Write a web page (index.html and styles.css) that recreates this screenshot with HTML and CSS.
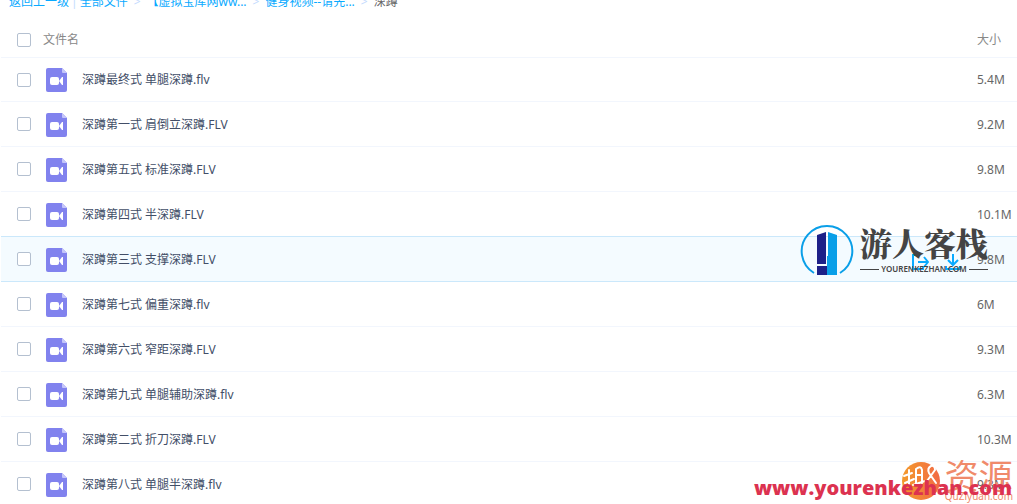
FILE: index.html
```html
<!DOCTYPE html>
<html lang="zh-CN">
  <head>
    <meta charset="utf-8">
    <title>深蹲</title>
    <link rel="stylesheet" href="styles.css">
  </head>
  <body>
    <svg class="sprite" aria-hidden="true">
      <symbol id="icon-video" viewBox="0 0 21 24">
        <path d="M2 0H16L21 5V22Q21 24 19 24H2Q0 24 0 22V2Q0 0 2 0Z" fill="#8182ee"/>
        <path d="M16 0L21 5H17Q16 5 16 4Z" fill="#c5c6fa"/>
        <rect x="4" y="9" width="9" height="8" rx="2" fill="#fff"/>
        <path d="M13 13L16 9H17V17H16Z" fill="#fff"/>
      </symbol>
    </svg>

    <nav class="breadcrumb">
      <a href="#">返回上一级</a><span class="bar">|</span><a href="#">全部文件</a>
      <span class="arrow">&gt;</span>
      <a href="#">【虚拟宝库网ww...</a>
      <span class="arrow">&gt;</span>
      <a href="#">健身视频--请先...</a>
      <span class="arrow">&gt;</span>
      <span>深蹲</span>
    </nav>

    <table class="files">
      <colgroup>
        <col class="col-check">
        <col class="col-icon">
        <col>
        <col class="col-actions">
        <col class="col-size">
      </colgroup>
      <thead>
        <tr>
          <th class="check"><input type="checkbox" aria-label="全选"></th>
          <th colspan="2">文件名</th>
          <th></th>
          <th>大小</th>
        </tr>
      </thead>
      <tbody>
        <tr>
          <td class="check"><input type="checkbox" id="f1"></td>
          <td class="icon"><svg><use href="#icon-video"/></svg></td>
          <td class="name"><label for="f1">深蹲最终式 单腿深蹲.flv</label></td>
          <td class="actions"></td>
          <td class="size">5.4M</td>
        </tr>
        <tr>
          <td class="check"><input type="checkbox" id="f2"></td>
          <td class="icon"><svg><use href="#icon-video"/></svg></td>
          <td class="name"><label for="f2">深蹲第一式 肩倒立深蹲.FLV</label></td>
          <td class="actions"></td>
          <td class="size">9.2M</td>
        </tr>
        <tr>
          <td class="check"><input type="checkbox" id="f3"></td>
          <td class="icon"><svg><use href="#icon-video"/></svg></td>
          <td class="name"><label for="f3">深蹲第五式 标准深蹲.FLV</label></td>
          <td class="actions"></td>
          <td class="size">9.8M</td>
        </tr>
        <tr>
          <td class="check"><input type="checkbox" id="f4"></td>
          <td class="icon"><svg><use href="#icon-video"/></svg></td>
          <td class="name"><label for="f4">深蹲第四式 半深蹲.FLV</label></td>
          <td class="actions"></td>
          <td class="size">10.1M</td>
        </tr>
        <tr class="active">
          <td class="check"><input type="checkbox" id="f5"></td>
          <td class="icon"><svg><use href="#icon-video"/></svg></td>
          <td class="name"><label for="f5">深蹲第三式 支撑深蹲.FLV</label></td>
          <td class="actions">
            <div class="tools">
              <button type="button" aria-label="分享">
                <svg viewBox="0 0 18 18"><path d="M9 2H2V16H12V13M7 9H17M13 4L17 9L13 14"/></svg>
              </button>
              <button type="button" aria-label="下载">
                <svg viewBox="0 0 18 18"><path d="M9 1V12M4 7L9 12L14 7M2 13V16H16V13"/></svg>
              </button>
            </div>
          </td>
          <td class="size">9.8M</td>
        </tr>
        <tr>
          <td class="check"><input type="checkbox" id="f6"></td>
          <td class="icon"><svg><use href="#icon-video"/></svg></td>
          <td class="name"><label for="f6">深蹲第七式 偏重深蹲.flv</label></td>
          <td class="actions"></td>
          <td class="size">6M</td>
        </tr>
        <tr>
          <td class="check"><input type="checkbox" id="f7"></td>
          <td class="icon"><svg><use href="#icon-video"/></svg></td>
          <td class="name"><label for="f7">深蹲第六式 窄距深蹲.FLV</label></td>
          <td class="actions"></td>
          <td class="size">9.3M</td>
        </tr>
        <tr>
          <td class="check"><input type="checkbox" id="f8"></td>
          <td class="icon"><svg><use href="#icon-video"/></svg></td>
          <td class="name"><label for="f8">深蹲第九式 单腿辅助深蹲.flv</label></td>
          <td class="actions"></td>
          <td class="size">6.3M</td>
        </tr>
        <tr>
          <td class="check"><input type="checkbox" id="f9"></td>
          <td class="icon"><svg><use href="#icon-video"/></svg></td>
          <td class="name"><label for="f9">深蹲第二式 折刀深蹲.FLV</label></td>
          <td class="actions"></td>
          <td class="size">10.3M</td>
        </tr>
        <tr>
          <td class="check"><input type="checkbox" id="f10"></td>
          <td class="icon"><svg><use href="#icon-video"/></svg></td>
          <td class="name"><label for="f10">深蹲第八式 单腿半深蹲.flv</label></td>
          <td class="actions"></td>
          <td class="size">9.3M</td>
        </tr>
      </tbody>
    </table>

    <div class="brand">
      <svg class="brand-logo" viewBox="0 0 54 54">
        <path d="M14 49A25.300 25.300 0 1 1 40 49" fill="none" stroke="#0a9fe8" stroke-width="2"/>
        <path d="M17 11L26 8V40H17Z" fill="#1d2088"/>
        <path d="M17 42H27V51H17Z" fill="#1d2088"/>
        <path d="M28 8L37 11V51H27V32H28Z" fill="#0a9fe8"/>
      </svg>
      <div class="brand-text">
        <div class="brand-name">游人客栈</div>
        <div class="brand-url">YOURENKEZHAN.COM</div>
      </div>
    </div>

    <div class="source">
      <svg class="source-logo" viewBox="0 0 40 40">
        <defs>
          <linearGradient id="orange">
            <stop offset="0" stop-color="#f39a2c"/>
            <stop offset="1" stop-color="#f26a45"/>
          </linearGradient>
        </defs>
        <circle cx="20" cy="20" r="19" fill="url(#orange)"/>
        <path d="M3 15L11 12M8 9V24M4 22L13 18M15 8V24M15 8Q20 4 21 9V22M15 14H21M12 24L24 20M26 20L34 9Q34 4 30 5Q26 7 28 12L35 22" fill="none" stroke="#fff" stroke-width="2" stroke-linecap="round"/>
      </svg>
      <div class="source-text">
        <div class="source-name">资源</div>
        <div class="source-url">QuZiyuan.com</div>
      </div>
    </div>
    <div class="site">www.yourenkezhan.com</div>
  </body>
</html>
```
FILE: styles.css
```css
* {
  margin: 0;
  padding: 0;
  box-sizing: border-box;
}

body {
  position: relative;
  height: 100vh;
  overflow: hidden;
  background: #fff;
  color: #424e67;
  font-family: "Noto Sans", "Noto Sans CJK SC", sans-serif;
  font-size: 12px;
  line-height: 18px;
}

.sprite {
  display: none;
}

.breadcrumb {
  display: flex;
  height: 18px;
  margin-top: -7px;
  padding-left: 9px;
  white-space: nowrap;
  color: #666;
}

.breadcrumb a {
  color: #09aaff;
  text-decoration: none;
}

.bar {
  padding: 0 2px;
  color: #c4dbfe;
}

.arrow {
  padding: 0 6px;
  color: #c4dbfe;
}

.files {
  width: 100%;
  margin-top: 11px;
  padding-left: 1px;
  border-spacing: 0;
  table-layout: fixed;
}

.col-check {
  width: 42px;
}

.col-icon {
  width: 39px;
}

.col-actions {
  width: 66px;
}

.col-size {
  width: 40px;
}

.files th {
  height: 36px;
  border-bottom: 1px solid #f2f6fd;
  color: #888;
  font-weight: normal;
  text-align: left;
}

.files td {
  height: 45px;
  padding-top: 2px;
  border-bottom: 1px solid #f2f6fd;
}

.files tbody tr:first-child td {
  height: 44px;
  padding-top: 0;
}

.files .check {
  padding-top: 0;
  padding-left: 16px;
}

.files .icon {
  padding-left: 3px;
}

.icon svg {
  display: block;
  width: 21px;
  height: 24px;
}

.files .actions {
  padding-top: 6px;
}

.files .size {
  color: #666;
  white-space: nowrap;
}

.files tr.active td {
  background: #f4fbff;
  border-bottom-color: #cbe8fb;
  box-shadow: 0 -1px #cbe8fb;
}

input[type="checkbox"] {
  display: block;
  width: 14px;
  height: 14px;
  appearance: none;
  background: #fff;
  border: 1px solid #b4c0d0;
  border-radius: 2px;
}

.tools {
  display: flex;
  gap: 15px;
}

.tools button {
  width: 18px;
  height: 18px;
  background: none;
  border: none;
}

.tools svg {
  display: block;
  fill: none;
  stroke: #09aaff;
  stroke-width: 2;
}

/* logos over the list */
.brand {
  position: absolute;
  top: 224px;
  right: 29px;
  display: flex;
  gap: 6px;
  pointer-events: none;
}

.brand-logo {
  width: 54px;
  height: 54px;
}

.brand-name {
  margin-bottom: 4px;
  color: #444;
  font-family: "Noto Serif CJK SC", "Noto Sans CJK SC", serif;
  font-size: 32px;
  font-weight: 900;
  line-height: 36px;
}

.brand-url {
  display: flex;
  align-items: center;
  gap: 2px;
  color: #444;
  font-size: 8px;
  font-weight: 600;
  line-height: 10px;
}

.brand-url::before,
.brand-url::after {
  content: "";
  flex: 1;
  height: 1px;
  background: #444;
}

.source {
  position: absolute;
  top: 461px;
  right: 4px;
  display: flex;
  gap: 4px;
  color: #f08a6a;
  pointer-events: none;
}

.source-logo {
  width: 40px;
  height: 40px;
}

.source-name {
  font-family: "Noto Sans CJK SC", sans-serif;
  font-size: 34px;
  font-weight: 400;
  line-height: 28px;
}

.source-url {
  font-size: 10px;
  line-height: 14px;
}

.site {
  position: absolute;
  top: 476px;
  right: 5px;
  color: #dc3250;
  font-family: "Open Sans", "Noto Sans", sans-serif;
  font-size: 20px;
  font-weight: 800;
  line-height: 24px;
}
```
